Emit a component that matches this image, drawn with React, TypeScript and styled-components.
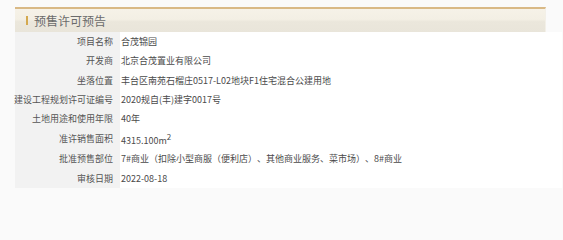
import React from "react";
import styled, { createGlobalStyle } from "styled-components";

const Global = createGlobalStyle`
  html, body { margin: 0; padding: 0; background: #fafafa; }
  body {
    font-family: "Noto Sans CJK SC", "Noto Sans", sans-serif;
    text-spacing-trim: space-all;
  }
`;

const Page = styled.div`
  padding: 7px 0 0 15px;
  width: 548px;
`;

const Header = styled.div`
  width: 531px;
  height: 25px;
  box-sizing: border-box;
  border-top: 2px solid #d9b986;
  border-right: 1px solid #f3f0e8;
  background: linear-gradient(#f6f2e8 0%, #f3efe4 45%, #ebe7dc 55%, #e9e5da 100%);
  display: flex;
  align-items: center;
  padding-left: 11px;
  gap: 6px;
`;

const Bar = styled.span`
  display: block;
  width: 2px;
  height: 9px;
  background: #d4a94f;
`;

const Title = styled.h2`
  margin: 0;
  font-size: 12px;
  font-weight: normal;
  color: #6b6b6b;
  line-height: 1;
`;

const Table = styled.div`
  display: grid;
  grid-template-columns: 105px 1fr;
  width: 547px;
  background: #ffffff;
`;

const Label = styled.div<{ $h: number }>`
  background: #f2f2f2;
  height: ${(p) => p.$h}px;
  display: flex;
  align-items: center;
  justify-content: flex-end;
  padding-right: 7px;
  font-size: 9px;
  color: #555;
  white-space: nowrap;
`;

const Value = styled.div<{ $h: number }>`
  height: ${(p) => p.$h}px;
  display: flex;
  align-items: center;
  padding-left: 1px;
  font-size: 9px;
  color: #4a4a4a;
  white-space: nowrap;
`;

const Area = styled.span`
  padding-top: 3px;
`;

const Sup = styled.sup`
  font-size: 8px;
  line-height: 0;
  vertical-align: 4px;
`;

const rows: { label: string; value: React.ReactNode; h: number }[] = [
  { label: "项目名称", value: "合茂锦园", h: 19.25 },
  { label: "开发商", value: "北京合茂置业有限公司", h: 19.25 },
  { label: "坐落位置", value: "丰台区南苑石榴庄0517-L02地块F1住宅混合公建用地", h: 19.25 },
  { label: "建设工程规划许可证编号", value: "2020规自(丰)建字0017号", h: 19.25 },
  { label: "土地用途和使用年限", value: "40年", h: 19.25 },
  {
    label: "准许销售面积",
    value: (
      <Area>
        4315.100m<Sup>2</Sup>
      </Area>
    ),
    h: 21,
  },
  { label: "批准预售部位", value: "7#商业（扣除小型商服（便利店）、其他商业服务、菜市场）、8#商业", h: 19.25 },
  { label: "审核日期", value: "2022-08-18", h: 19.25 },
];

export default function App() {
  return (
    <>
      <Global />
      <Page>
        <Header>
          <Bar />
          <Title>预售许可预告</Title>
        </Header>
        <Table>
          {rows.map((r) => (
            <React.Fragment key={r.label}>
              <Label $h={r.h}>{r.label}</Label>
              <Value $h={r.h}>{r.value}</Value>
            </React.Fragment>
          ))}
        </Table>
      </Page>
    </>
  );
}
